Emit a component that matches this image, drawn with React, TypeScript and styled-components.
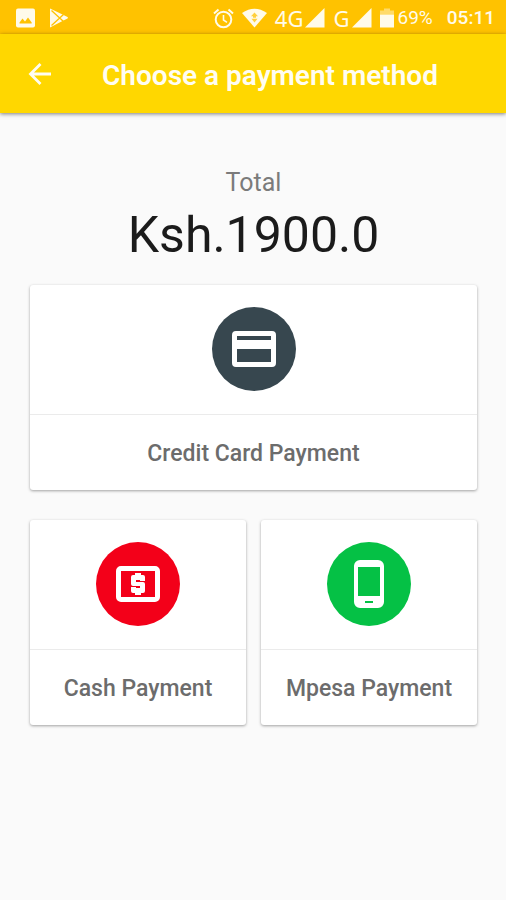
import React from "react";
import styled, { createGlobalStyle } from "styled-components";

const GlobalStyle = createGlobalStyle`
  * { box-sizing: border-box; }
  body {
    margin: 0;
    background: #fafafa;
    font-family: Roboto, "Liberation Sans", sans-serif;
  }
  button { font: inherit; }
`;

const Screen = styled.div`
  min-height: 100vh;
  background: #fafafa;
`;

const StatusBar = styled.div`
  display: flex;
  align-items: center;
  justify-content: space-between;
  height: 34px;
  padding: 2px 11px 0 16px;
  background: #ffc200;
  color: #fffbea;
`;

const StatusGroup = styled.div<{ $gap: number }>`
  display: flex;
  align-items: center;
  gap: ${({ $gap }) => $gap}px;

  svg {
    display: block;
    flex: none;
  }
`;

const Network = styled.span`
  font-family: "Noto Sans", Roboto, sans-serif;
  font-size: 22px;
  line-height: 28px;
`;

const StatusText = styled.span`
  font-size: 19px;
  font-weight: 500;
  line-height: 28px;
`;

const BatteryText = styled(StatusText)`
  font-weight: 400;
`;

const AppBar = styled.header`
  display: flex;
  align-items: center;
  gap: 38px;
  height: 79px;
  padding: 0 16px;
  background: #ffd700;
  color: #fffdf2;
  box-shadow: 0 1px 4px rgba(0, 0, 0, 0.5);
`;

const BackButton = styled.button`
  display: grid;
  place-items: center;
  width: 48px;
  height: 48px;
  padding: 0;
  border: 0;
  background: none;
  color: inherit;
  cursor: pointer;
`;

const Title = styled.h1`
  margin: 0;
  padding-top: 4px;
  font-size: 28px;
  font-weight: 600;
  line-height: 36px;
  white-space: nowrap;
`;

const Content = styled.main`
  padding: 53px 29px 32px 30px;
`;

const Summary = styled.section`
  text-align: center;
`;

const SummaryLabel = styled.p`
  margin: 0;
  color: #7b7b7b;
  font-size: 25px;
  line-height: 34px;
`;

const Amount = styled.p`
  margin: 0 0 14px;
  color: #1b1b1b;
  font-size: 50px;
  line-height: 71px;
`;

const Methods = styled.section`
  display: grid;
  grid-template-columns: 1fr 1fr;
  column-gap: 15px;
  row-gap: 30px;
`;

const MethodCard = styled.button<{ $wide?: boolean }>`
  grid-column: ${({ $wide }) => ($wide ? "1 / -1" : "auto")};
  display: flex;
  flex-direction: column;
  padding: 0;
  border: 0;
  border-radius: 3px;
  background: #fff;
  box-shadow: 0 1px 3px rgba(0, 0, 0, 0.36);
  cursor: pointer;
`;

const CardTop = styled.span`
  display: flex;
  justify-content: center;
  width: 100%;
  padding: 22px 0 23px;
  border-bottom: 1px solid #ebebeb;
`;

const IconDisc = styled.span<{ $color: string }>`
  display: grid;
  place-items: center;
  width: 84px;
  height: 84px;
  border-radius: 50%;
  background: ${({ $color }) => $color};
`;

const CardLabel = styled.span`
  width: 100%;
  padding: 25px 0 22px;
  color: #6c6c6c;
  font-size: 23px;
  font-weight: 500;
  line-height: 28px;
  text-align: center;
  white-space: nowrap;
`;

const PictureIcon = () => (
  <svg width="19" height="20" viewBox="0 0 19 20" aria-hidden="true">
    <rect width="19" height="19" y="0.5" rx="2" fill="currentColor" />
    <path d="M3.5 15.5v-1l3-4 2.5 3 3-4 3.7 5v1z" fill="#ffc200" />
  </svg>
);

const PlayIcon = () => (
  <svg width="20" height="20" viewBox="0 0 20 20" aria-hidden="true">
    <path d="M1 .5 13.5 6.600l5 2.400q1 .8 0 1.600l-5 2.400L1 19.500z" fill="currentColor" />
    <path d="m2.500 2.500 12 11M2.500 17.500l12-11" stroke="#ffc200" strokeWidth="1.300" />
  </svg>
);

const AlarmIcon = () => (
  <svg width="21" height="21" viewBox="0 0 21 21" fill="none" stroke="currentColor" aria-hidden="true">
    <circle cx="10.500" cy="11.500" r="7.800" strokeWidth="2" />
    <path d="M1 5.500 5.500 1.500M20 5.500l-4.500-4" strokeWidth="2" />
    <path d="M10.500 7v5l3.500 2.300" strokeWidth="1.600" />
  </svg>
);

const WifiIcon = () => (
  <svg width="25" height="20" viewBox="0 0 25 20" aria-hidden="true">
    <path d="M0 5Q12.500-3.500 25 5L12.500 19.500z" fill="currentColor" />
    <path d="M12.500 4.500 16 8.200h-2v1.600h-3V8.200H9zM9.500 10.800h6l-3 3.700z" fill="#ffc200" opacity=".75" />
  </svg>
);

const SignalIcon = () => (
  <svg width="20" height="20" viewBox="0 0 20 20" aria-hidden="true">
    <path d="M0 19.500 19.500 0v19.500z" fill="currentColor" />
  </svg>
);

const BatteryIcon = () => (
  <svg width="14" height="20" viewBox="0 0 14 20" aria-hidden="true">
    <path d="M4 0.500h6v2h4v4H0v-4h4z" fill="currentColor" opacity=".45" />
    <path d="M0 6.500h14V19.500H0z" fill="currentColor" />
  </svg>
);

const ArrowIcon = () => (
  <svg width="24" height="24" viewBox="0 0 24 24" fill="none" stroke="currentColor" strokeWidth="2.800" aria-hidden="true">
    <path d="M23 12H3M12.500 2 2.500 12l10 10" />
  </svg>
);

const CreditCardIcon = () => (
  <svg width="44" height="36" viewBox="0 0 44 36" aria-hidden="true">
    <path
      fill="#fff"
      fillRule="evenodd"
      d="M4 0h36a4 4 0 0 1 4 4v28a4 4 0 0 1-4 4H4a4 4 0 0 1-4-4V4a4 4 0 0 1 4-4zM5 5v4h34V5zM5 18v13h34V18z"
    />
  </svg>
);

const CashIcon = () => (
  <svg width="44" height="36" viewBox="0 0 44 36" fill="none" aria-hidden="true">
    <rect x="2.500" y="2.500" width="39" height="31" rx="2.500" stroke="#fff" strokeWidth="5" />
    <path
      fill="#fff"
      d="M19 7h6v2h2q2 0 2 2v4h-5v-1h-4v2h7q2 0 2 2v7q0 2-2 2h-2v2h-6v-2h-2q-2 0-2-2v-4h5v1h4v-2h-7q-2 0-2-2v-7q0-2 2-2h2z"
    />
  </svg>
);

const PhoneIcon = () => (
  <svg width="32" height="48" viewBox="0 0 32 48" aria-hidden="true">
    <path
      fill="#fff"
      fillRule="evenodd"
      d="M7 0h18a6 6 0 0 1 6 6v36a6 6 0 0 1-6 6H7a6 6 0 0 1-6-6V6a6 6 0 0 1 6-6zM5 7v29h22V7zM12 41v2h8V41z"
    />
  </svg>
);

const methods = [
  { label: "Credit Card Payment", color: "#37474f", Icon: CreditCardIcon, wide: true },
  { label: "Cash Payment", color: "#f30019", Icon: CashIcon, wide: false },
  { label: "Mpesa Payment", color: "#05c145", Icon: PhoneIcon, wide: false },
];

export default function App() {
  return (
    <Screen>
      <GlobalStyle />
      <StatusBar>
        <StatusGroup $gap={14}>
          <PictureIcon />
          <PlayIcon />
        </StatusGroup>
        <StatusGroup $gap={14}>
          <StatusGroup $gap={8}>
            <AlarmIcon />
            <WifiIcon />
            <StatusGroup $gap={2}>
              <Network>4G</Network>
              <SignalIcon />
            </StatusGroup>
            <StatusGroup $gap={2}>
              <Network>G</Network>
              <SignalIcon />
            </StatusGroup>
            <StatusGroup $gap={4}>
              <BatteryIcon />
              <BatteryText>69%</BatteryText>
            </StatusGroup>
          </StatusGroup>
          <StatusText>05:11</StatusText>
        </StatusGroup>
      </StatusBar>
      <AppBar>
        <BackButton type="button" aria-label="Back">
          <ArrowIcon />
        </BackButton>
        <Title>Choose a payment method</Title>
      </AppBar>
      <Content>
        <Summary>
          <SummaryLabel>Total</SummaryLabel>
          <Amount>Ksh.1900.0</Amount>
        </Summary>
        <Methods>
          {methods.map(({ label, color, Icon, wide }) => (
            <MethodCard key={label} type="button" $wide={wide}>
              <CardTop>
                <IconDisc $color={color}>
                  <Icon />
                </IconDisc>
              </CardTop>
              <CardLabel>{label}</CardLabel>
            </MethodCard>
          ))}
        </Methods>
      </Content>
    </Screen>
  );
}
